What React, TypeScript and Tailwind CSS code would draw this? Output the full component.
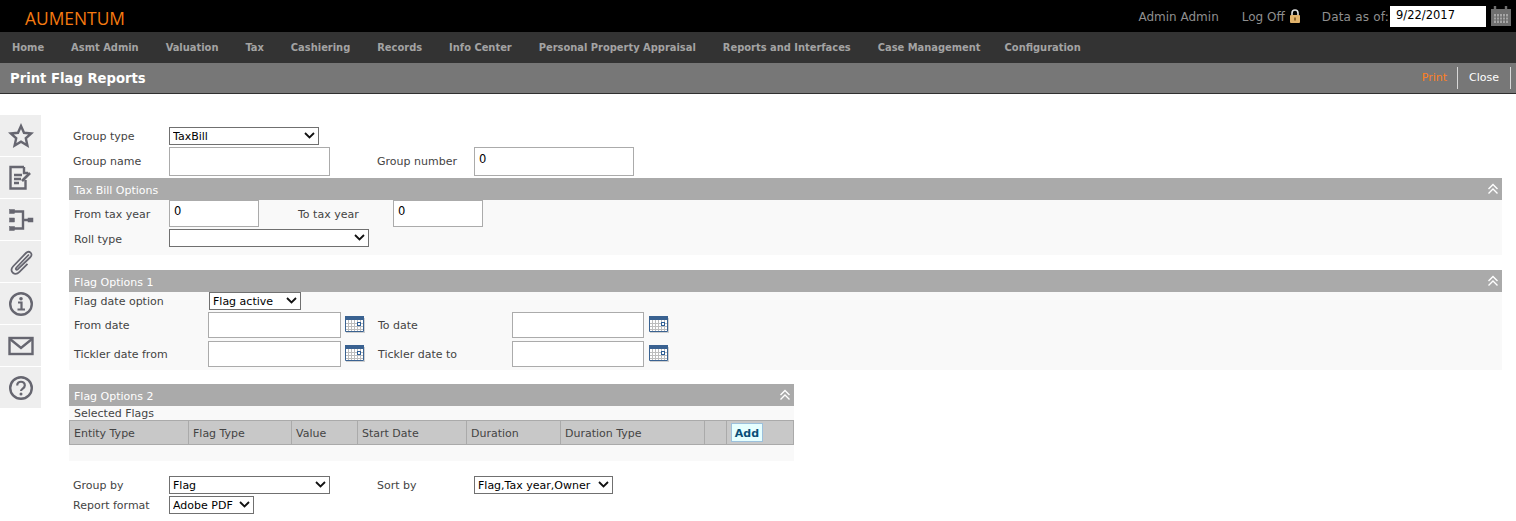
import React from 'react';

const NAV_ITEMS = [
  'Home',
  'Asmt Admin',
  'Valuation',
  'Tax',
  'Cashiering',
  'Records',
  'Info Center',
  'Personal Property Appraisal',
  'Reports and Interfaces',
  'Case Management',
  'Configuration',
];

const COLUMNS = [
  { label: 'Entity Type', width: 'w-[119px]' },
  { label: 'Flag Type', width: 'w-[103px]' },
  { label: 'Value', width: 'w-[66px]' },
  { label: 'Start Date', width: 'w-[109px]' },
  { label: 'Duration', width: 'w-[94px]' },
  { label: 'Duration Type', width: 'w-[144px]' },
  { label: '', width: 'w-[22px]' },
];

const SideIcon: React.FC<{ children: React.ReactNode }> = ({ children }) => (
  <div className="flex h-[41px] w-[41px] items-center justify-center bg-[#eeeeee]">
    <svg width="26" height="26" viewBox="0 0 26 26" fill="none" stroke="#666670" strokeWidth="2.4">
      {children}
    </svg>
  </div>
);

const Chevron = () => (
  <svg width="11" height="7" viewBox="0 0 11 7" fill="none" stroke="#111" strokeWidth="1.8" className="pointer-events-none absolute right-[4px] top-[5px]">
    <path d="M1 1l4.5 4.5L10 1" />
  </svg>
);

const DoubleUp = () => (
  <svg width="12" height="12" viewBox="0 0 12 12" fill="none" stroke="#ffffff" strokeWidth="1.4">
    <path d="M1.5 6L6 1.5 10.5 6M1.5 10.5L6 6l4.5 4.5" />
  </svg>
);

const CalendarIcon: React.FC<{ className?: string }> = ({ className = 'ml-[4px]' }) => (
  <svg width="20" height="17" viewBox="0 0 20 17" className={`mb-[1px] shrink-0 ${className}`}>
    <rect x="1" y="2" width="19" height="15" fill="#cfcfcf" />
    <rect x="0" y="1" width="19" height="15" fill="#ffffff" />
    <rect x="0" y="0" width="19" height="4" fill="#3a6291" />
    <path d="M3.5 4v11M6.5 4v11M9.5 4v11M12.5 4v11M15.5 4v11M0 7.5h19M0 10.5h19M0 13.5h19" stroke="#bdbdbd" strokeWidth="1" />
    <path d="M.5 4v11.5h18V4" fill="none" stroke="#3a6291" strokeWidth="1" />
    <rect x="12.5" y="6.5" width="3" height="3" fill="#ffffff" stroke="#2f5f96" strokeWidth="1" />
  </svg>
);

const TextBox: React.FC<{ value?: string; className: string }> = ({ value, className }) => (
  <input
    readOnly
    value={value ?? ''}
    className={`shrink-0 border border-[#ababab] bg-white pb-[6px] pl-[4px] text-[11.5px] text-black outline-none ${className}`}
  />
);

const Select: React.FC<{ value: string; className: string }> = ({ value, className }) => (
  <div className={`relative h-[18px] shrink-0 ${className}`}>
    <select className="block h-full w-full appearance-none rounded-none border border-[#707070] bg-white pl-[3px] pt-[1px] text-[11px] text-black outline-none">
      <option>{value}</option>
    </select>
    <Chevron />
  </div>
);

const SectionHeader: React.FC<{ title: string }> = ({ title }) => (
  <div className="flex h-[22px] items-center justify-between bg-[#aaaaaa] pl-[5px] pr-[3px] text-[11px] text-white">
    <span className="pt-[4px]">{title}</span>
    <DoubleUp />
  </div>
);

const Label: React.FC<{ children: React.ReactNode; className: string }> = ({ children, className }) => (
  <label className={`shrink-0 pt-[2px] text-[11px] text-[#444444] ${className}`}>{children}</label>
);

export default function App() {
  return (
    <div className="h-[521px] w-[1516px] overflow-hidden bg-white font-['DejaVu_Sans',Verdana,sans-serif]">
      <header className="flex h-[32px] items-center bg-black pl-[25px] pr-[5px]">
        <span className="mt-[5px] font-['Open_Sans',sans-serif] text-[17.4px] leading-none text-[#f57a10]">AUMENTUM</span>
        <div className="ml-auto flex items-center text-[12px] text-[#8f8f8f]">
          <span className="pt-[1px]">Admin Admin</span>
          <span className="ml-[23px] pt-[1px]">Log Off</span>
          <svg width="12" height="14" viewBox="0 0 12 14" className="ml-[4px]">
            <path d="M3 6.5V4a3 3 0 016 0v2.5" fill="none" stroke="#e0e0e0" strokeWidth="1.6" />
            <rect x="1" y="6" width="10" height="8" rx="1" fill="#e2b36c" />
            <rect x="5.2" y="8.5" width="1.6" height="3" fill="#7a5520" />
          </svg>
          <span className="ml-[21px] pt-[1px] tracking-[0.2px]">Data as of:</span>
          <input readOnly value="9/22/2017" className="ml-[1px] h-[21px] w-[96px] bg-white pb-[3px] pl-[6px] text-[11.5px] text-black outline-none" />
          <svg width="20" height="20" viewBox="0 0 20 20" className="ml-[5px]">
            <rect x="0" y="3" width="20" height="17" fill="#6f6f6f" />
            <path d="M4 0v5M15 0v5" stroke="#6f6f6f" strokeWidth="2.4" />
            <rect x="3" y="8" width="14" height="9" fill="#a5a5a5" />
            <path d="M5.5 8v9M8.5 8v9M11.5 8v9M14.5 8v9M3 11h14M3 14h14" stroke="#6a6a6a" strokeWidth="1" />
          </svg>
        </div>
      </header>

      <nav className="flex h-[31px] items-center gap-[27px] bg-[#333333] pl-[12px] pt-[2px] font-['DejaVu_Sans_Condensed','DejaVu_Sans',sans-serif] text-[11px] font-bold text-[#a3a3a3]">
        {NAV_ITEMS.map((item) => (
          <span key={item} className="last:-ml-[3px]">{item}</span>
        ))}
      </nav>

      <div className="flex h-[31px] items-center justify-between border-b border-[#2f2f2f] bg-[#777777] pl-[10px] pr-[5px]">
        <h1 className="pt-[2px] text-[13.2px] font-bold text-white">Print Flag Reports</h1>
        <div className="flex items-center text-[11px]">
          <span className="flex h-[22px] items-center border-r border-[#d8d8d8] pr-[10px] text-[#ff7f1f]">Print</span>
          <span className="flex h-[22px] items-center border-r border-[#d8d8d8] px-[11px] text-white">Close</span>
        </div>
      </div>

      <div className="flex">
        <aside className="mt-[21px] flex w-[41px] shrink-0 flex-col gap-[1px]">
          <SideIcon>
            <path d="M13 3l3 6.8 7.2.7-5.4 4.8 1.6 7.2L13 18.7l-6.4 3.8 1.6-7.2-5.4-4.8 7.2-.7z" />
          </SideIcon>
          <SideIcon>
            <path d="M16 2H2.5v21.5h15V15" />
            <path d="M16 2v6h4" />
            <path d="M6 10h8M6 14h7M6 18h5" />
            <path d="M14 16l8-8" strokeWidth="2.6" />
          </SideIcon>
          <SideIcon>
            <path d="M3 4.5h12v17H3M15 13h9" />
            <rect x="1.5" y="2.5" width="5" height="4" fill="#666670" strokeWidth="0.5" />
            <rect x="1.5" y="11" width="5" height="4" fill="#666670" strokeWidth="0.5" />
            <rect x="1.5" y="19.5" width="5" height="4" fill="#666670" strokeWidth="0.5" />
            <rect x="20" y="11" width="5" height="4" fill="#666670" strokeWidth="0.5" />
          </SideIcon>
          <SideIcon>
            <path d="M21 5.5L8.5 18.5c-1.5 1.6-.2 3 1.4 1.7L22.5 8c3-3.2-1.4-7.2-4.5-4L5 17.5c-4.5 4.8 1.8 10 6.5 5.4l8-8" strokeWidth="1.8" />
          </SideIcon>
          <SideIcon>
            <circle cx="13" cy="13" r="10.8" strokeWidth="2.4" />
            <circle cx="13" cy="7.8" r="1.8" fill="#666670" stroke="none" />
            <path d="M10 11.5h3.5v7M9.5 18.5h7.5" strokeWidth="2.2" />
          </SideIcon>
          <SideIcon>
            <rect x="1.5" y="5" width="23" height="16" />
            <path d="M2 6l11 9 11-9" />
          </SideIcon>
          <SideIcon>
            <circle cx="13" cy="13" r="10.8" strokeWidth="2.4" />
            <path d="M9.2 10.5c0-5 7.6-5 7.6 0 0 3-3.8 3-3.8 5.5" strokeWidth="2.2" />
            <circle cx="13" cy="19" r="1.5" fill="#666670" stroke="none" />
          </SideIcon>
        </aside>

        <main className="ml-[28px] w-[1433px] pt-[33px]">
          <div className="flex h-[18px] items-center pl-[4px]">
            <Label className="w-[96px]">Group type</Label>
            <Select value="TaxBill" className="w-[150px]" />
          </div>
          <div className="mt-[2px] flex h-[29px] items-center pl-[4px]">
            <Label className="w-[96px]">Group name</Label>
            <TextBox className="h-[29px] w-[161px]" />
            <Label className="ml-[47px] w-[97px]">Group number</Label>
            <TextBox value="0" className="h-[29px] w-[160px]" />
          </div>

          <section className="mt-[2px] h-[77px] bg-[#f9f9f9]">
            <SectionHeader title="Tax Bill Options" />
            <div className="flex h-[27px] items-center pl-[5px]">
              <Label className="w-[95px] pt-[4px]">From tax year</Label>
              <TextBox value="0" className="h-[27px] w-[90px]" />
              <Label className="ml-[39px] w-[95px] pt-[4px]">To tax year</Label>
              <TextBox value="0" className="h-[27px] w-[90px]" />
            </div>
            <div className="mt-[2px] flex h-[18px] items-center pl-[5px]">
              <Label className="w-[95px] pt-[4px]">Roll type</Label>
              <Select value="" className="w-[200px]" />
            </div>
          </section>

          <section className="mt-[15px] h-[100px] bg-[#f9f9f9]">
            <SectionHeader title="Flag Options 1" />
            <div className="flex h-[17px] items-center pl-[5px]">
              <Label className="w-[135px] pt-[4px]">Flag date option</Label>
              <Select value="Flag active" className="w-[92px]" />
            </div>
            <div className="mt-[3px] flex h-[26px] items-center pl-[5px]">
              <Label className="w-[134px]">From date</Label>
              <TextBox className="h-[26px] w-[133px]" />
              <CalendarIcon />
              <Label className="ml-[13px] w-[134px]">To date</Label>
              <TextBox className="h-[26px] w-[132px]" />
              <CalendarIcon className="ml-[5px]" />
            </div>
            <div className="mt-[3px] flex h-[26px] items-center pl-[5px]">
              <Label className="w-[134px]">Tickler date from</Label>
              <TextBox className="h-[26px] w-[133px]" />
              <CalendarIcon />
              <Label className="ml-[13px] w-[134px]">Tickler date to</Label>
              <TextBox className="h-[26px] w-[132px]" />
              <CalendarIcon className="ml-[5px]" />
            </div>
          </section>

          <section className="mt-[14px] h-[77px] w-[725px] bg-[#f9f9f9]">
            <SectionHeader title="Flag Options 2" />
            <div className="flex h-[14px] items-center pl-[5px] pt-[2px] text-[11px] text-[#444444]">Selected Flags</div>
            <div className="flex h-[25px] border border-[#aaaaaa] bg-[#c8c8c8] text-[11px] text-[#444444]">
              {COLUMNS.map((col) => (
                <div key={col.label} className={`flex shrink-0 items-center border-r border-[#aaaaaa] pl-[4px] pt-[4px] ${col.width}`}>
                  {col.label}
                </div>
              ))}
              <div className="flex flex-1 items-center pl-[4px]">
                <button className="h-[19px] w-[32px] border border-[#9cc0dc] bg-[#e6ffff] pt-[2px] text-[11px] font-bold text-[#0b4f78]">Add</button>
              </div>
            </div>
          </section>

          <div className="mt-[15px] flex h-[18px] items-center pl-[4px]">
            <Label className="w-[96px]">Group by</Label>
            <Select value="Flag" className="w-[161px]" />
            <Label className="ml-[47px] w-[97px]">Sort by</Label>
            <Select value="Flag,Tax year,Owner" className="w-[139px]" />
          </div>
          <div className="mt-[2px] flex h-[18px] items-center pl-[4px]">
            <Label className="w-[96px]">Report format</Label>
            <Select value="Adobe PDF" className="w-[85px]" />
          </div>
        </main>
      </div>
    </div>
  );
}
